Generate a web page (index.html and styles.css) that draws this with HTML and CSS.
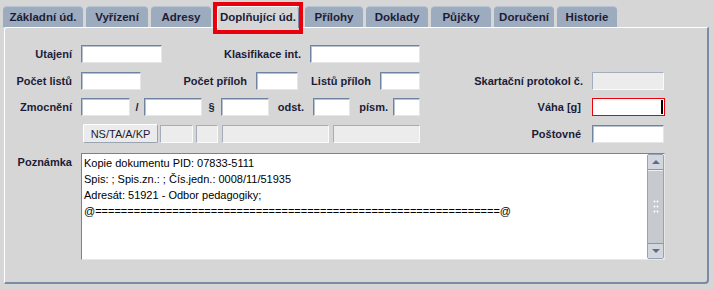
FILE: index.html
```html
<!DOCTYPE html>
<html lang="cs">
<head>
    <meta charset="UTF-8">
    <title>Doplňující údaje</title>
    <link rel="stylesheet" href="styles.css">
</head>
<body>
    <div class="window">
        <div class="tabs">
            <div class="tab">Základní úd.</div>
            <div class="tab">Vyřízení</div>
            <div class="tab">Adresy</div>
            <div class="tab active">Doplňující úd.<span class="mark"></span></div>
            <div class="tab">Přílohy</div>
            <div class="tab">Doklady</div>
            <div class="tab">Půjčky</div>
            <div class="tab">Doručení</div>
            <div class="tab">Historie</div>
        </div>
        <div class="panel">
            <div class="row">
                <span class="lbl w67">Utajení</span><div class="field w81"></div>
                <span class="lbl w139">Klasifikace int.</span><div class="field w110"></div>
            </div>
            <div class="row">
                <span class="lbl w67">Počet listů</span><div class="field w60"></div>
                <span class="lbl w106">Počet příloh</span><div class="field w42"></div>
                <span class="lbl w73">Listů příloh</span><div class="field w40"></div>
                <span class="lbl w163">Skartační protokol č.</span><div class="field off w72"></div>
            </div>
            <div class="row">
                <span class="lbl w67">Zmocnění</span><div class="field w49"></div>
                <span class="lbl sym w14">/</span><div class="field w58"></div>
                <span class="lbl sym w19">§</span><div class="field w48"></div>
                <span class="lbl w35">odst.</span><div class="field w37"></div>
                <span class="lbl w38 near">písm.</span><div class="field w27"></div>
                <span class="lbl w161 far">Váha [g]</span><div class="field focus w73"><span class="caret"></span></div>
            </div>
            <div class="row">
                <button class="btn">NS/TA/A/KP</button>
                <div class="field off w33 ml2"></div>
                <div class="field off w22 ml3"></div>
                <div class="field off w107 ml4"></div>
                <div class="field off w87 ml4"></div>
                <span class="lbl w161 far">Poštovné</span><div class="field w72"></div>
            </div>
            <div class="row memo-row">
                <span class="lbl w67">Poznámka</span>
                <div class="memo">
                    <div class="memo-text">Kopie dokumentu PID: 07833-5111<br>Spis: ; Spis.zn.: ; Čís.jedn.: 0008/11/51935<br>Adresát: 51921 - Odbor pedagogiky;<br>@===============================================================@</div>
                    <div class="scroll">
                        <div class="sb-btn"><span class="arrow up"></span></div>
                        <div class="sb-thumb">
                            <span class="grip"></span>
                        </div>
                        <div class="sb-btn"><span class="arrow down"></span></div>
                    </div>
                </div>
            </div>
        </div>
    </div>
</body>
</html>
```

FILE: styles.css
```css
body { margin: 0; background: #d6d6d6; font-family: "Liberation Sans", Arial, sans-serif; color: #1c1c38; }
.window { padding: 6px 4px 0 3px; }

.tabs { display: flex; gap: 3px; height: 21px; position: relative; z-index: 1; }
.tab { box-sizing: border-box; height: 21px; background: #9dabbe; border-radius: 4px 4px 0 0; border-top: 1px solid #b9c4d2; font-size: 11.5px; font-weight: bold; line-height: 20px; text-align: center; }
.tab:nth-child(1) { width: 80px; }
.tab:nth-child(2) { width: 62px; }
.tab:nth-child(3) { width: 60px; }
.tab:nth-child(4) { width: 82px; }
.tab:nth-child(5) { width: 58px; }
.tab:nth-child(6) { width: 62px; }
.tab:nth-child(7), .tab:nth-child(8), .tab:nth-child(9) { width: 60px; }
.tab.active { position: relative; height: 22px; margin: 0 3px; background: #d6d6d6; border: 1px solid #fff; border-right-color: #7a8ba5; border-bottom: none; }
.mark { position: absolute; left: -5px; right: -5px; top: -5px; bottom: -6px; border: 4px solid #e8000c; }

.panel { margin-left: 1px; height: 257px; box-sizing: border-box; border: 1px solid #fff; border-right: 2px solid #7a8ba5; border-bottom: 2px solid #7a8ba5; border-radius: 3px 0 4px 0; padding: 17px 0 0 0; }

.row { display: flex; align-items: center; height: 18px; margin-bottom: 8px; }
.row:first-child { margin-bottom: 9px; }
.lbl { font-size: 11px; font-weight: bold; text-align: right; margin-right: 9px; line-height: 18px; white-space: nowrap; }
.lbl.sym { text-align: center; margin-right: 0; }
.lbl.near { margin-right: 5px; }
.lbl.far { margin-right: 11px; }

.field { box-sizing: border-box; height: 18px; background: #fff; border: 1px solid; border-color: #7083a0 #e6e6e6 #e6e6e6 #7083a0; box-shadow: inset 1px 1px 0 #b7c2d1; }
.field.off { background: #ececec; border-color: #a3adbb #fafafa #fafafa #a3adbb; box-shadow: none; }
.field.focus { position: relative; border: 1px solid #e8000c; box-shadow: none; }
.caret { position: absolute; right: 1px; top: 1px; bottom: 1px; width: 2px; background: #000; }

.btn { box-sizing: border-box; width: 75px; height: 19px; margin-left: 78px; padding: 0; background: #ebebeb; border: 1px solid; border-color: #fff #9aa3b0 #9aa3b0 #fff; border-radius: 2px; font-family: "Liberation Sans", Arial, sans-serif; font-size: 11px; color: #1c1c38; }
.row:nth-child(4) { height: 19px; margin-bottom: 10px; }

.ml2 { margin-left: 2px; }
.ml3 { margin-left: 3px; }
.ml4 { margin-left: 4px; }
.w14 { width: 14px; } .w19 { width: 19px; } .w22 { width: 22px; } .w27 { width: 27px; }
.w33 { width: 33px; } .w35 { width: 35px; } .w37 { width: 37px; } .w38 { width: 38px; }
.w40 { width: 40px; } .w42 { width: 42px; } .w48 { width: 48px; } .w49 { width: 49px; }
.w58 { width: 58px; } .w60 { width: 60px; } .w67 { width: 67px; } .w72 { width: 72px; }
.w73 { width: 73px; } .w81 { width: 81px; } .w87 { width: 87px; } .w106 { width: 106px; }
.w107 { width: 107px; } .w110 { width: 110px; } .w139 { width: 139px; } .w161 { width: 161px; }
.w163 { width: 163px; }

.memo-row { align-items: flex-start; height: 107px; }
.memo { display: flex; box-sizing: border-box; width: 584px; height: 107px; background: #fff; border: 1px solid; border-color: #7083a0 #e6e6e6 #e6e6e6 #7083a0; }
.memo-text { flex: 1; padding: 1px 2px; font-size: 11px; line-height: 16px; color: #000; white-space: nowrap; overflow: hidden; }

.scroll { display: flex; flex-direction: column; width: 15px; background: #c9cdd3; border: 1px solid #93a2b7; border-radius: 2px; }
.sb-btn { height: 14px; display: flex; align-items: center; justify-content: center; background: #d3d7dd; border-bottom: 1px solid #8696ad; }
.sb-btn:last-child { border-bottom: none; border-top: 1px solid #8696ad; }
.arrow { width: 0; height: 0; border-left: 4px solid transparent; border-right: 4px solid transparent; }
.arrow.up { border-bottom: 4px solid #5a6d8c; }
.arrow.down { border-top: 4px solid #5a6d8c; }
.sb-thumb { flex: 1; display: flex; align-items: center; justify-content: center; background: #c6c9ce; border-top: 1px solid #eef0f3; }
.grip { width: 6px; height: 16px; background-image: radial-gradient(circle, #fff 0.8px, transparent 1.2px); background-size: 3px 5px; }
```
